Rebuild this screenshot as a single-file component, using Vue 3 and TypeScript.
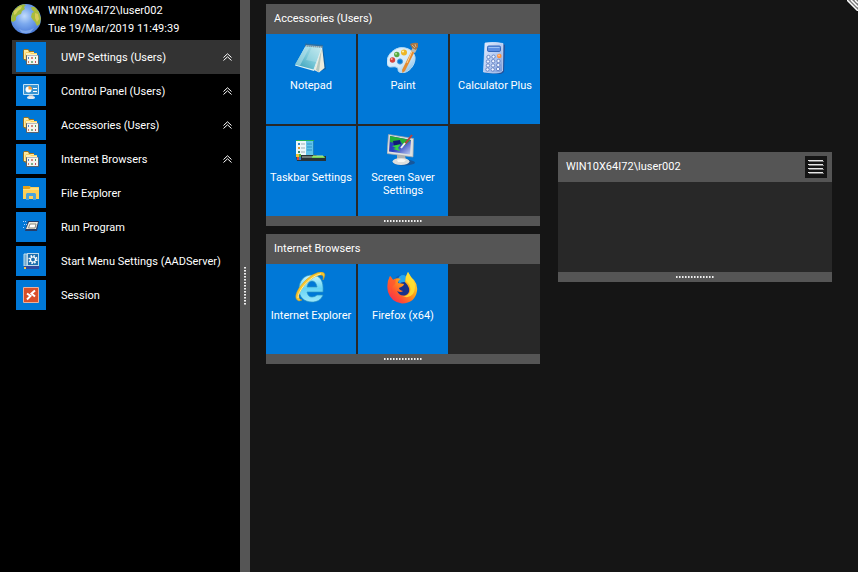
<script setup lang="ts">
import { ref } from 'vue'

interface MenuItem {
  label: string
  icon: string
  group?: boolean
}
interface Tile {
  label: string
  icon: string
}
interface Panel {
  title: string
  tiles: Tile[]
}

const account = 'WIN10X64I72\\luser002'
const clock = 'Tue 19/Mar/2019 11:49:39'
const selected = ref(0)

const menu: MenuItem[] = [
  { label: 'UWP Settings (Users)', icon: 'programs', group: true },
  { label: 'Control Panel (Users)', icon: 'control', group: true },
  { label: 'Accessories (Users)', icon: 'programs', group: true },
  { label: 'Internet Browsers', icon: 'programs', group: true },
  { label: 'File Explorer', icon: 'explorer' },
  { label: 'Run Program', icon: 'run' },
  { label: 'Start Menu Settings (AADServer)', icon: 'settings' },
  { label: 'Session', icon: 'session' },
]

const panels: Panel[] = [
  {
    title: 'Accessories (Users)',
    tiles: [
      { label: 'Notepad', icon: 'notepad' },
      { label: 'Paint', icon: 'paint' },
      { label: 'Calculator Plus', icon: 'calculator' },
      { label: 'Taskbar Settings', icon: 'taskbar' },
      { label: 'Screen Saver Settings', icon: 'screensaver' },
    ],
  },
  {
    title: 'Internet Browsers',
    tiles: [
      { label: 'Internet Explorer', icon: 'ie' },
      { label: 'Firefox (x64)', icon: 'firefox' },
    ],
  },
]
</script>

<template>
  <div class="desktop">
    <aside class="sidebar">
      <header class="account">
        <svg class="globe" viewBox="0 0 30 30" aria-hidden="true">
          <defs>
            <radialGradient id="sea" cx=".45" cy=".4" r=".6">
              <stop offset="0" stop-color="#c3dcfb" />
              <stop offset=".45" stop-color="#7ba9ee" />
              <stop offset="1" stop-color="#4a7bd8" />
            </radialGradient>
            <clipPath id="ball"><circle cx="15" cy="15" r="15" /></clipPath>
          </defs>
          <circle cx="15" cy="15" r="15" fill="url(#sea)" />
          <g clip-path="url(#ball)">
            <path d="M0 13 2 7 7 2 12 0 15 1 13 3 14 5 11 7 10 10 7 11 5 13 5 16 2 18 0 17Z" fill="#9fb93c" />
            <path d="M3 7 8 3 11 2 10 5 7 7 5 10 3 11Z" fill="#d3cf5a" />
            <path d="M20 3 24 3 28 8 30 14 29 20 26 22 24 18 22 16 20 13 21 9 23 8 21 6Z" fill="#a9bb3d" />
            <path d="M24 9 27 10 28 15 26 18 24 14Z" fill="#d9cb59" />
            <path d="M8 25Q15 29 23 24L19 29 11 29Z" fill="#a8c9f7" opacity=".5" />
          </g>
        </svg>
        <div class="who">
          <div>{{ account }}</div>
          <time datetime="2019-03-19T11:49:39">{{ clock }}</time>
        </div>
      </header>

      <nav class="menu" aria-label="Start menu">
        <button
          v-for="(item, i) in menu"
          :key="item.label"
          type="button"
          class="row"
          :class="{ active: selected === i }"
          @click="selected = i"
        >
          <span class="badge">
            <svg class="icon-small" viewBox="0 0 16 16" aria-hidden="true">
              <g v-if="item.icon === 'programs'">
                <path d="M0 2 1 0h4l2 2h4v2h2v8H3L0 10Z" fill="#9b7420" />
                <path d="M1 1h4l1 2h5v7H1Z" fill="#ffe9a0" />
                <path d="M2 5 3 3h4l1 1h6v8H3Z" fill="#f7cf5e" />
                <path d="M3 4h4l1 1h6v1H3Z" fill="#fff1b8" />
                <rect x="3" y="6" width="13" height="10" rx="1" fill="#5d646c" />
                <rect x="4" y="7" width="11" height="8" fill="#f4f4ee" />
                <rect x="4" y="6" width="11" height="1" fill="#b5bac0" />
                <path d="M5 8h1v2H5Z" fill="#4d86c5" /><path d="M8 8h2v2H8Z" fill="#d6877a" /><path d="M12 8h1v2h-1Z" fill="#50a45d" />
                <path d="M5 12h1v2H5Z" fill="#dc7b50" /><path d="M8 12h2v2H8Z" fill="#7fb189" /><path d="M12 12h1v2h-1Z" fill="#c54e62" />
              </g>
              <g v-else-if="item.icon === 'control'">
                <rect x="0" y="1" width="16" height="11" rx="1" fill="#c7e5f7" />
                <rect x="1" y="2" width="14" height="9" fill="#3894d2" />
                <circle cx="5.500" cy="6.500" r="3" fill="#fff" />
                <path d="M5.500 6.500V3a3.500 3.500 0 0 1 3.500 3.500Z" fill="#ff9d32" />
                <path d="M10 5.500h4M10 8.500h4" stroke="#fff" />
                <path d="M6 12h4l1 2H5Z" fill="#a9b5c0" />
                <ellipse cx="8" cy="14.500" rx="4" ry="1.500" fill="#e6eaed" />
              </g>
              <g v-else-if="item.icon === 'explorer'">
                <path d="M0 1h6l2 1h8v12H0Z" fill="#ffcf55" />
                <path d="M0 1h6l1.500 1.500L6.500 4H0Z" fill="#e4a21b" />
                <path d="M0 4h7l1-1h8v2H0Z" fill="#ffe082" />
                <path d="M3 15V9l1-1h8l1 1v6h-3v-4H6v4Z" fill="#4ba3dd" />
                <path d="M6 11h4v3H6Z" fill="#ffcf55" />
              </g>
              <g v-else-if="item.icon === 'run'">
                <path d="M5 2h11l-2 10H2Z" fill="#263d69" />
                <path d="M6 3h9l-2 7H3Z" fill="#e9e7dc" />
                <path d="M7 5h6l-1 4H5.500Z" fill="#fff" stroke="#8b8d83" />
                <path d="M0 2.500h4M1 5.500h3M0 8.500h2" stroke="#a9cdfb" stroke-dasharray="1 1" />
              </g>
              <g v-else-if="item.icon === 'settings'">
                <path d="M1 1h3v12H1Z" fill="#71a8cf" stroke="#bde0ed" />
                <rect x="4" y="0" width="12" height="13" fill="#bdd7e8" />
                <rect x="5" y="1" width="10" height="11" fill="#1d6fae" />
                <circle cx="10" cy="6.500" r="3.600" fill="none" stroke="#fff" stroke-width="2" stroke-dasharray="1.400 1.427" />
                <circle cx="10" cy="6.500" r="2.500" fill="none" stroke="#fff" stroke-width="1.200" />
                <rect x="1" y="13" width="15" height="3" fill="#314a9d" />
                <rect x="1" y="14" width="2" height="2" fill="#f5ca53" />
              </g>
              <g v-else>
                <rect width="16" height="16" rx="1" fill="#edb09a" />
                <rect x="1" y="1" width="14" height="14" fill="#d94f29" />
                <path d="M4 6.500 7.500 9 4 12.500M12 3.500 8.500 6.500 12 9.500" fill="none" stroke="#fff" stroke-width="2" />
              </g>
            </svg>
          </span>
          <span class="row-label">{{ item.label }}</span>
          <svg v-if="item.group" class="chevron" viewBox="0 0 9 8" aria-hidden="true">
            <path d="M.5 4.500 4.500.8l4 3.700M.5 7.500l4-3.700 4 3.700" />
          </svg>
        </button>
      </nav>
    </aside>

    <div class="splitter" role="separator" aria-orientation="vertical"><span class="grip-v"></span></div>

    <main class="board">
      <div class="column">
        <section v-for="panel in panels" :key="panel.title" class="panel">
          <h2 class="panel-head">{{ panel.title }}</h2>
          <div class="tiles">
            <button v-for="tile in panel.tiles" :key="tile.label" type="button" class="tile">
              <svg class="icon-large" viewBox="0 0 32 32" aria-hidden="true">
                <g v-if="tile.icon === 'notepad'">
                  <defs>
                    <linearGradient id="page" x1="0" y1="1" x2="1" y2="0">
                      <stop offset="0" stop-color="#2d98b4" /><stop offset=".5" stop-color="#79c8d8" /><stop offset="1" stop-color="#c3e9ef" />
                    </linearGradient>
                  </defs>
                  <path d="M23 30 31 27 28 5Z" fill="#154f81" opacity=".6" />
                  <path d="M27 4 29.500 26 24 30.500 19 28Z" fill="#ecebdc" />
                  <path d="M27 5 24 30 21 28Z" fill="#b7c8be" />
                  <path d="M11 3 27.500 4.500 19 29 0 23.500Z" fill="#e3f4f5" />
                  <path d="M11 4 26.500 5.500 18.500 27.500 0 22.500Z" fill="url(#page)" />
                  <path d="M11 4 15 4.500 5 23.500 0 22.500Z" fill="#bce6ef" opacity=".55" />
                  <path d="M17 5 26.500 5.500 21 20 11 18Z" fill="#d0f0f3" opacity=".3" />
                  <path d="M10.500 3 28 4.500" stroke="#536671" stroke-width="3" stroke-dasharray="1 1" />
                </g>
                <g v-else-if="tile.icon === 'paint'">
                  <defs>
                    <linearGradient id="palette" x1="0" y1="0" x2="1" y2="1">
                      <stop offset="0" stop-color="#e3f3fd" /><stop offset=".6" stop-color="#d3eafa" /><stop offset="1" stop-color="#71b4e2" />
                    </linearGradient>
                  </defs>
                  <path d="M9 7C17 3 27 8 28 15S22 32 14 30.500C9 30 13 26 9 25S2 27 0 22C-1 16 3 10 9 7Z" fill="url(#palette)" stroke="#b3d9f2" />
                  <circle cx="5.500" cy="18" r="2.700" fill="#d7433e" /><circle cx="4.700" cy="17" r="1" fill="#ffaba0" />
                  <circle cx="9.800" cy="12.500" r="2.700" fill="#57a943" /><circle cx="9" cy="11.700" r="1" fill="#bce69e" />
                  <circle cx="17" cy="10.500" r="3" fill="#edb625" /><circle cx="16" cy="9.500" r="1.100" fill="#fff0a4" />
                  <circle cx="13" cy="19.500" r="2.600" fill="#0078d7" stroke="#519dd8" />
                  <path d="M25 8 28 9 18 29 15.500 31 15 28Z" fill="#e58b2f" />
                  <path d="M25.500 8 20 21" stroke="#ffd391" stroke-width="1" />
                  <path d="M24 9 26 5 30 7 28 11Z" fill="#bdb8ab" />
                  <path d="M23 2Q27 0 31 1L31 5 29 8 25 6Z" fill="#a67647" />
                  <path d="M25 3 28 6M28 2 29 5" stroke="#dbb37a" />
                </g>
                <g v-else-if="tile.icon === 'calculator'">
                  <defs>
                    <linearGradient id="shell" x1="0" y1="0" x2="1" y2="1">
                      <stop offset="0" stop-color="#e6eefd" /><stop offset=".6" stop-color="#adc4ef" /><stop offset="1" stop-color="#6e91d3" />
                    </linearGradient>
                  </defs>
                  <path d="M24 2 26 3 25 30 22 32 6 31Z" fill="#22519b" />
                  <path d="M6 1Q15-.5 24 1.500L23.500 29Q22 31 14 31L4.500 30Z" fill="url(#shell)" stroke="#d8e4fb" stroke-width=".7" />
                  <rect x="8.500" y="4" width="13" height="5.500" rx="1.300" fill="#5c8ee3" stroke="#3669bd" />
                  <path d="M9.500 5.500h11" stroke="#9bc1f5" />
                  <g fill="#eef4ff" stroke="#627fc1" stroke-width=".9">
                    <circle cx="9.500" cy="15" r="1.700" /><circle cx="14.500" cy="14.700" r="1.700" />
                    <circle cx="9" cy="19.500" r="1.700" /><circle cx="14.200" cy="19.200" r="1.700" /><circle cx="19.500" cy="19" r="1.700" />
                    <circle cx="9" cy="23.500" r="1.700" /><circle cx="14" cy="23.500" r="1.700" /><circle cx="19.300" cy="23" r="1.700" />
                    <circle cx="8.500" cy="27.500" r="1.700" /><circle cx="13.700" cy="27.500" r="1.700" /><circle cx="19" cy="27" r="1.700" />
                  </g>
                  <circle cx="20.300" cy="14" r="2.300" fill="#ff923d" /><circle cx="20" cy="13.400" r="1" fill="#ffc392" />
                </g>
                <g v-else-if="tile.icon === 'taskbar'">
                  <rect x="1" y="6" width="18" height="18" fill="#1d82bd" />
                  <rect x="1" y="6" width="18" height="1" fill="#25b253" />
                  <rect x="1" y="7" width="10" height="15" fill="#edf7f8" />
                  <rect x="11" y="7" width="7" height="15" fill="#61c2e9" />
                  <path d="M12 10h5M12 13h5M12 16h5" stroke="#2d92c7" />
                  <path d="M6 10h4M6 14h4M6 18h4" stroke="#9eb1b8" />
                  <path d="M3 9h2v2H3Z" fill="#2e8dd3" /><path d="M3 13h2v2H3Z" fill="#dc9b35" /><path d="M3 17h2v2H3Z" fill="#348c76" />
                  <path d="M1 21h20l1 1h9v5H2Z" fill="#283337" />
                  <path d="M7 22h13v2H7Z" fill="#707b78" /><path d="M17 22h12l1 2H17Z" fill="#74d158" />
                  <path d="M18 22h10" stroke="#c1f395" />
                  <path d="M1 20h3v3H1Z" fill="#efc534" /><path d="M4 20h2v3H4Z" fill="#56b743" /><path d="M2 23h2v3H2Z" fill="#dd4736" /><path d="M4 23h2v3H4Z" fill="#3680d4" />
                </g>
                <g v-else-if="tile.icon === 'screensaver'">
                  <defs>
                    <linearGradient id="screen" x1="0" y1="0" x2="1" y2="1">
                      <stop offset="0" stop-color="#2538b4" /><stop offset=".5" stop-color="#2b41c0" /><stop offset="1" stop-color="#c3cff0" />
                    </linearGradient>
                  </defs>
                  <ellipse cx="17" cy="28.500" rx="11" ry="3" fill="#16579b" />
                  <path d="M10 21h8l1 6h-9Z" fill="#aeb2b3" />
                  <ellipse cx="14" cy="27.500" rx="8.500" ry="3.500" fill="#dedfdd" />
                  <path d="M10 26Q14 24 19 26L17 28H11Z" fill="#f7f7f3" />
                  <path d="M1.500.5 26.500 4.500 26 23 0 19.500Z" fill="#dfe1df" stroke="#9da5aa" stroke-width=".7" />
                  <path d="M3 2 24 6 23 20.500 2 17.500Z" fill="url(#screen)" />
                  <path d="M3 2 24 6 17 12 13 7 8 9 3 8Z" fill="#27b035" />
                  <path d="M6 7 13 6 14 11 7 12Z" fill="#101b79" />
                  <path d="M5 12 14 10 11 14 13 17 6 15 9 14Z" fill="#36d345" />
                  <path d="M25 1 18 10" stroke="#b7413e" stroke-width="2" />
                  <path d="M18 9 14 14" stroke="#edf2ef" stroke-width="2" />
                </g>
                <g v-else-if="tile.icon === 'ie'">
                  <defs>
                    <linearGradient id="letter" x1="0" y1="0" x2="0" y2="1">
                      <stop offset="0" stop-color="#c8f5fd" /><stop offset=".5" stop-color="#66d4f5" /><stop offset="1" stop-color="#9ce7fa" />
                    </linearGradient>
                  </defs>
                  <path d="M28 20H12Q13 25 17 25 20 25 22 23H28C26 28 22 30 17 30 9 30 4 25 4 17S9 3 17 3 29 9 28 20ZM12 15H22Q21 9 17 9T12 15Z" fill="url(#letter)" fill-rule="evenodd" stroke="#2893c3" stroke-width=".7" />
                  <path d="M4 29C-2 27 1 19 8 11 16 2 26-2 29 1Q31 3 28 8 29 3 26 3C21 3 14 8 9 14 3 21 2 27 7 28Z" fill="#f8c62d" stroke="#cf9a1c" stroke-width=".5" />
                  <path d="M3 26Q3 21 9 13.500 17 4 26 1.800" fill="none" stroke="#fff2a7" stroke-width="1" />
                </g>
                <g v-else>
                  <defs>
                    <linearGradient id="fur" x1="1" y1="0" x2="0" y2="1">
                      <stop offset="0" stop-color="#fff155" /><stop offset=".4" stop-color="#ffa516" /><stop offset=".7" stop-color="#ff5032" /><stop offset="1" stop-color="#ee1b69" />
                    </linearGradient>
                  </defs>
                  <circle cx="16" cy="14" r="11" fill="#135bb5" />
                  <circle cx="16" cy="8" r="5" fill="#25a7ee" />
                  <circle cx="17" cy="17" r="7" fill="#18328a" />
                  <path d="M3 4Q5 6 6 8 9 5 14 7 11 8 11 11L17 12Q17 14 12 16 12 18 16 19 14 21 10 19 13 25 19 23 23 21 22 16 21 13 18 10 18 5 21 0 23 5 27 8 31 13 30 19 28 31 15 31.500 4 30 1 20-1 11 3 4Z" fill="url(#fur)" />
                  <path d="M21 0Q18 5 19 9 25 14 23 20 20 25 15 24 22 27 26 22 30 15 26 8Z" fill="#ffe635" opacity=".8" />
                  <path d="M3 4 6 8 9 7 8 12Q3 16 4 23-1 15 3 4Z" fill="#ff542f" opacity=".7" />
                </g>
              </svg>
              <span>{{ tile.label }}</span>
            </button>
          </div>
          <div class="panel-foot"><span class="grip-h"></span></div>
        </section>
      </div>

      <div class="column lowered">
        <section class="panel">
          <div class="panel-head">
            <h2>{{ account }}</h2>
            <button type="button" class="options" aria-label="Panel options">
              <svg viewBox="0 0 22 22" aria-hidden="true">
                <path d="M4 5.500h15M4 9.500h15M4 13.500h15M4 17.500h15" stroke="#777" />
                <path d="M3 4.500h15M3 8.500h15M3 12.500h15M3 16.500h15" stroke="#e6e6e6" />
              </svg>
            </button>
          </div>
          <div class="tiles"></div>
          <div class="panel-foot"><span class="grip-h"></span></div>
        </section>
      </div>
    </main>

    <svg class="corner" viewBox="0 0 11 11" aria-hidden="true">
      <path d="M0 0H11V11Z" fill="#777" />
      <path d="M0 0 11 11M4 0 11 7M8 0 11 3" stroke="#fff" stroke-width="1.500" />
    </svg>
  </div>
</template>

<style>
body {
  background: #151515;
}
</style>

<style scoped>
.desktop {
  position: relative;
  display: flex;
  min-height: 100vh;
  background: #151515;
  color: #fff;
  font: 11px/14px Roboto, 'Liberation Sans', sans-serif;
}
.sidebar {
  flex: 0 0 240px;
  min-width: 0;
  background: #000;
}
.account {
  display: flex;
  gap: 7px;
  padding: 2px 0 2px 11px;
}
.globe {
  width: 30px;
  height: 30px;
  margin-top: 2px;
}
.who {
  line-height: 18px;
}
.menu {
  padding-left: 12px;
}
button {
  margin: 0;
  border: 0;
  color: inherit;
  font: inherit;
  cursor: pointer;
}
.row {
  display: flex;
  align-items: center;
  width: 100%;
  height: 34px;
  padding: 0 8px 0 4px;
  background: transparent;
  text-align: left;
}
.row.active {
  background: #333;
}
.badge {
  display: grid;
  flex: none;
  place-items: center;
  width: 30px;
  height: 30px;
  margin-right: 15px;
  background: #0078d7;
}
.icon-small {
  width: 16px;
  height: 16px;
}
.row-label {
  flex: 1;
  padding-top: 2px;
  white-space: nowrap;
}
.chevron {
  width: 9px;
  height: 8px;
  fill: none;
  stroke: #fff;
}
.splitter {
  display: flex;
  flex: 0 0 10px;
  align-items: center;
  justify-content: center;
  background: #555;
}
.grip-v {
  width: 2px;
  height: 38px;
  background: repeating-linear-gradient(180deg, #eee 0 1px, #aaa 1px 2px, #555 2px 3px);
}
.grip-h {
  width: 38px;
  height: 2px;
  background: repeating-linear-gradient(90deg, #eee 0 1px, #aaa 1px 2px, #555 2px 3px);
}
.board {
  display: grid;
  flex: 1;
  grid-template-columns: repeat(2, minmax(0, 1fr));
  gap: 18px;
  align-items: start;
  padding: 4px 26px 4px 16px;
}
.column {
  display: grid;
  gap: 8px;
}
.lowered {
  margin-top: 148px;
}
.panel {
  background: #282828;
}
.panel-head {
  display: flex;
  align-items: center;
  justify-content: space-between;
  height: 30px;
  margin: 0;
  padding: 0 5px 0 8px;
  background: #555;
  font: inherit;
}
h2 {
  margin: 0;
  font: inherit;
}
.options {
  width: 22px;
  height: 22px;
  padding: 0;
  background: #151515;
}
.options svg {
  display: block;
}
.tiles {
  display: grid;
  grid-template-columns: repeat(3, minmax(0, 1fr));
  grid-auto-rows: 90px;
  gap: 2px;
  min-height: 90px;
}
.tile {
  display: flex;
  flex-direction: column;
  gap: 5px;
  align-items: center;
  padding: 8px 0 0;
  background: #0078d7;
  line-height: 13px;
  text-align: center;
}
.icon-large {
  flex: none;
  width: 32px;
  height: 32px;
}
.panel-foot {
  display: grid;
  place-items: center;
  height: 10px;
  background: #555;
}
.corner {
  position: absolute;
  top: 0;
  right: 0;
  width: 11px;
  height: 11px;
}
</style>
